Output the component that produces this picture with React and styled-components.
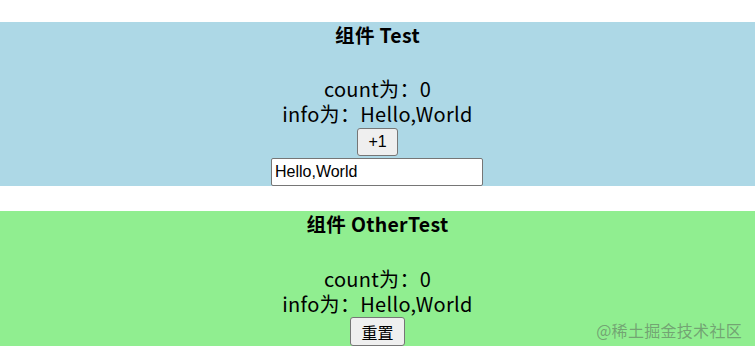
import React, { useState } from "react";
import styled, { createGlobalStyle } from "styled-components";

const GlobalStyle = createGlobalStyle`
  html, body {
    margin: 0;
    padding: 0;
    background: #fff;
  }
  body {
    font-family: "Noto Sans CJK SC", "Microsoft YaHei", sans-serif;
    color: #000;
  }
`;

const Page = styled.div`
  position: relative;
  width: 755px;
  height: 354px;
  padding-top: 22px;
  box-sizing: border-box;
  display: flex;
  flex-direction: column;
  gap: 25px;
  overflow: hidden;
`;

const Panel = styled.section`
  background: ${({ bg }) => bg};
  display: flex;
  flex-direction: column;
  align-items: center;
  text-align: center;
`;

const Title = styled.h3`
  margin: 0 0 ${({ gap }) => gap}px 0;
  font-size: 19.5px;
  line-height: 25px;
  font-weight: 700;
  letter-spacing: 0.3px;
`;

const Line = styled.div`
  font-size: 20px;
  line-height: 25px;
  letter-spacing: 0.3px;
`;

const Button = styled.button`
  margin-top: ${({ top }) => top}px;
  height: ${({ h }) => h}px;
  padding: 0 10px;
  font-family: "Liberation Sans", "Noto Sans CJK SC", sans-serif;
  font-size: 16px;
  color: #000;
  background: #efefef;
  border: 1px solid #767676;
  border-radius: 3px;
`;

const Input = styled.input`
  margin: 2px 1px 0 0;
  width: 212px;
  height: 28px;
  box-sizing: border-box;
  padding: 0 3px;
  font-family: "Liberation Sans", sans-serif;
  font-size: 16px;
  color: #000;
  background: #fff;
  border: 1px solid #767676;
  border-radius: 2px;
  outline: none;
`;

const Watermark = styled.div`
  position: absolute;
  right: 13px;
  bottom: 14px;
  font-size: 16px;
  line-height: 20px;
  color: rgba(90, 100, 90, 0.55);
  letter-spacing: 0.3px;
`;

const Test = ({ count, info, onAdd, onInfo }) => (
  <Panel bg="#add8e6">
    <Title gap={29}>组件 Test</Title>
    <Line>count为：{count}</Line>
    <Line>info为：{info}</Line>
    <Button top={2} h={28} onClick={onAdd}>+1</Button>
    <Input value={info} onChange={(e) => onInfo(e.target.value)} />
  </Panel>
);

const OtherTest = ({ count, info, onReset }) => (
  <Panel bg="#90ee90">
    <Title gap={30}>组件 OtherTest</Title>
    <Line>count为：{count}</Line>
    <Line>info为：{info}</Line>
    <Button top={1} h={29} onClick={onReset}>重置</Button>
  </Panel>
);

export default function App() {
  const [count, setCount] = useState(0);
  const [info, setInfo] = useState("Hello,World");

  return (
    <>
      <GlobalStyle />
      <Page>
        <Test
          count={count}
          info={info}
          onAdd={() => setCount(count + 1)}
          onInfo={setInfo}
        />
        <OtherTest
          count={count}
          info={info}
          onReset={() => {
            setCount(0);
            setInfo("Hello,World");
          }}
        />
        <Watermark>@稀土掘金技术社区</Watermark>
      </Page>
    </>
  );
}
